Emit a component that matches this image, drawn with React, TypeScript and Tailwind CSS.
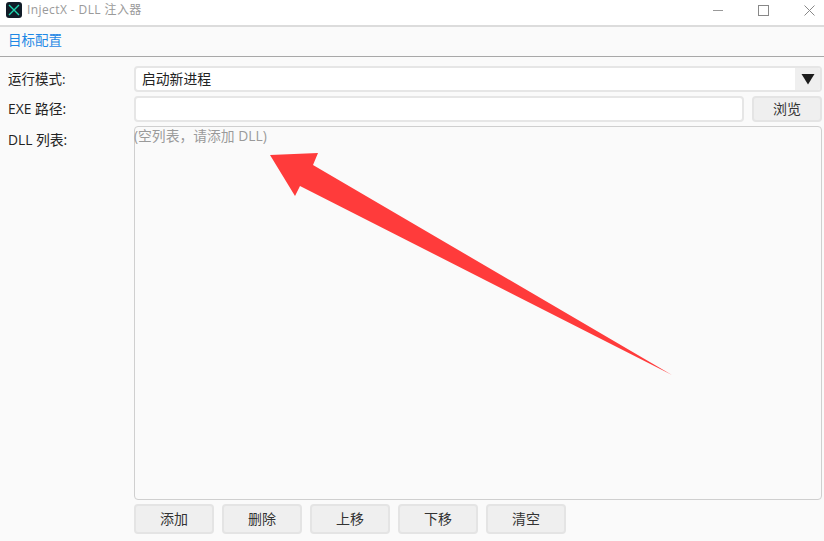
const font = { fontFamily: '"Open Sans", "Noto Sans CJK SC", sans-serif' };

const ActionButton = ({ label }: { label: string }) => (
  <button className="h-[30px] w-[80px] rounded-[4px] border-2 border-[#e4e4e4] bg-[#efefef] text-[14px] leading-none text-[#333]">
    {label}
  </button>
);

const Arrow = () => (
  <svg className="pointer-events-none absolute left-0 top-0" width="824" height="541">
    <polygon points="270,155 318,153 313,165 672,375 300,186 295,196" fill="#ff3b3b" />
  </svg>
);

export default function App() {
  return (
    <div
      style={font}
      className="relative flex h-[541px] w-[824px] flex-col overflow-hidden bg-[#fafafa] text-[14px] text-[#222]"
    >
      {/* Title bar */}
      <div className="flex h-[27px] shrink-0 items-center border-b-2 border-[#dcdcdc] bg-white pb-[5px] pl-[6px]">
        <svg width="16" height="16" viewBox="0 0 16 16">
          <rect width="16" height="16" rx="3" fill="#111c28" />
          <path d="M3 3 L13 13 M13 3 L3 13" stroke="#1fd6b0" strokeWidth="1.4" />
        </svg>
        <span className="ml-[5px] text-[12px] tracking-[0.4px] text-[#9a9a9a]">InjectX - DLL 注入器</span>
        <div className="ml-auto flex items-center pr-[9px]">
          <svg width="10" height="10" viewBox="0 0 10 10">
            <path d="M0 5.5 H10" stroke="#999" />
          </svg>
          <svg width="11" height="11" viewBox="0 0 11 11" className="ml-[35px]">
            <rect x="0.5" y="0.5" width="10" height="10" fill="none" stroke="#888" />
          </svg>
          <svg width="11" height="11" viewBox="0 0 11 11" className="ml-[35px]">
            <path d="M0.5 0.5 L10.5 10.5 M10.5 0.5 L0.5 10.5" stroke="#888" />
          </svg>
        </div>
      </div>

      {/* Tabs */}
      <div className="flex h-[30px] shrink-0 items-center border-b border-[#a8a8a8] pb-[2px] pl-[8px]">
        <span className="text-[13.5px] text-[#1e88e5]">目标配置</span>
      </div>

      {/* Form */}
      <div className="flex min-h-0 flex-1 flex-col gap-[4px] pl-[8px] pr-[2px] pt-[9px]">
        <div className="flex h-[26px] items-center">
          <label className="w-[126px] shrink-0 pt-[1px] text-[13.5px]">运行模式:</label>
          <div className="flex h-full flex-1 items-center overflow-hidden rounded-[4px] border-2 border-[#e6e6e6] bg-white">
            <span className="flex-1 pl-[6px] pt-[1px] text-[13.8px]">启动新进程</span>
            <div className="flex h-full w-[25px] items-center justify-center bg-[#efefef]">
              <svg width="14" height="12" viewBox="0 0 14 12">
                <polygon points="0.5,1 13.5,1 7,11.5" fill="#1c1c1c" />
              </svg>
            </div>
          </div>
        </div>

        <div className="flex h-[26px] items-center">
          <label className="w-[126px] shrink-0 pt-[1px] text-[13.8px]">EXE 路径:</label>
          <div className="h-full flex-1 rounded-[4px] border-2 border-[#e6e6e6] bg-white" />
          <button className="ml-[8px] h-full w-[70px] rounded-[4px] border-2 border-[#e4e4e4] bg-[#efefef] text-[14px] leading-none text-[#333]">
            浏览
          </button>
        </div>

        <div className="flex h-[374px]">
          <label className="w-[126px] shrink-0 pt-[4px] text-[13.8px]">DLL 列表:</label>
          <div className="flex-1 rounded-[4px] border border-[#cfcfcf] bg-[#fafafa]">
            <div className="-ml-px -mt-[1px] text-[13.8px] text-[#9a9a9a]">(空列表，请添加 DLL)</div>
          </div>
        </div>

        <div className="flex gap-[8px] pl-[126px]">
          <ActionButton label="添加" />
          <ActionButton label="删除" />
          <ActionButton label="上移" />
          <ActionButton label="下移" />
          <ActionButton label="清空" />
        </div>
      </div>

      <Arrow />
    </div>
  );
}
